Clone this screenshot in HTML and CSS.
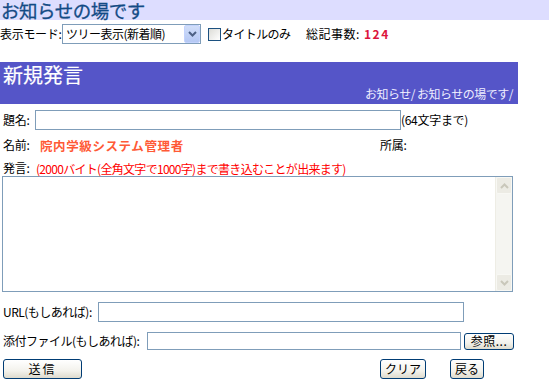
FILE: index.html
```html
<!DOCTYPE html>
<html lang="ja">
<head>
<meta charset="utf-8">
<title>お知らせの場です</title>
<link rel="stylesheet" href="styles.css">
</head>
<body>
<div class="top"><h1 class="site-title">お知らせの場です</h1></div>
<div class="mode-row">
  <span class="label l-mode">表示モード:</span>
  <div class="select">
    <span class="select-text">ツリー表示(新着順)</span>
    <span class="select-btn"><svg width="9" height="6" viewBox="0 0 9 6"><path d="M1 1 L4.5 4.5 L8 1" fill="none" stroke="#4d6185" stroke-width="2"/></svg></span>
  </div>
  <span class="checkbox"></span>
  <span class="label l-only">タイトルのみ</span>
  <span class="label total">総記事数: <b class="count">124</b></span>
</div>
<div class="band">
  <div class="band-title">新規発言</div>
  <div class="crumb">お知らせ/ お知らせの場です/</div>
</div>
<div class="form">
  <div class="row r-title">
    <span class="label l-title">題名:</span>
    <span class="input in-title"></span>
    <span class="label">(64文字まで)</span>
  </div>
  <div class="row r-name">
    <span class="label l-name">名前:</span>
    <span class="name">院内学級システム管理者</span>
    <span class="label">所属:</span>
  </div>
  <div class="row r-msg">
    <span class="label l-msg">発言:</span>
    <span class="note">(2000バイト(全角文字で1000字)まで書き込むことが出来ます)</span>
  </div>
  <div class="textarea">
    <div class="ta-body"></div>
    <div class="scroll">
      <span class="sbtn"><svg width="9" height="6" viewBox="0 0 9 6"><path d="M1 5 L4.5 1.5 L8 5" fill="none" stroke="#c9c7ba" stroke-width="2"/></svg></span>
      <span class="strack"></span>
      <span class="sbtn"><svg width="9" height="6" viewBox="0 0 9 6"><path d="M1 1 L4.5 4.5 L8 1" fill="none" stroke="#c9c7ba" stroke-width="2"/></svg></span>
    </div>
  </div>
  <div class="row r-url">
    <span class="label l-url">URL(もしあれば):</span>
    <span class="input in-url"></span>
  </div>
  <div class="row r-file">
    <span class="label l-file">添付ファイル(もしあれば):</span>
    <span class="input in-file"></span>
    <span class="btn b-browse">参照...</span>
  </div>
  <div class="row r-buttons">
    <span class="btn b-send">送信</span>
    <span class="btn b-clear">クリア</span>
    <span class="btn b-back">戻る</span>
  </div>
</div>
</body>
</html>
```
FILE: styles.css
```css
* { box-sizing: border-box; }
body {
  margin: 0;
  font-family: "Noto Sans CJK JP", "Noto Sans", sans-serif;
  font-size: 12px;
  color: #000;
  background: #fff;
  width: 549px;
}
.top {
  background: #ddddff;
  height: 20px;
  display: flex;
  align-items: center;
  padding-left: 1px;
}
.site-title {
  margin: 0;
  font-size: 18.5px;
  line-height: 1;
  font-weight: normal;
  color: #134b85;
  letter-spacing: -0.5px;
  white-space: nowrap;
  -webkit-text-stroke: 0.3px #134b85;
}
.mode-row {
  display: flex;
  align-items: center;
  height: 20px;
  margin-top: 4px;
}
.label { white-space: nowrap; line-height: 16px; letter-spacing: -0.3px; }
.l-mode { width: 62px; }
.select {
  width: 139px;
  height: 20px;
  border: 1px solid #7f9db9;
  display: flex;
  align-items: center;
  padding-left: 3px;
  justify-content: space-between;
}
.select-text { line-height: 16px; letter-spacing: -0.5px; }
.select-btn {
  width: 16px;
  height: 18px;
  background: linear-gradient(#d1def9, #b5c8f4);
  border: 1px solid #c3d3fd;
  border-radius: 2px;
  display: flex;
  align-items: center;
  justify-content: center;
}
.checkbox {
  width: 13px;
  height: 13px;
  margin-left: 7px;
  border: 1px solid #1c5180;
  background: linear-gradient(135deg, #dcdcd7, #fff);
  margin-right: 1px;
}
.l-only { width: 84px; letter-spacing: -0.6px; }
.total { letter-spacing: 0.5px; }
.count { color: #dc143c; font-weight: bold; margin-left: 1px; letter-spacing: 1.5px; }

.band {
  margin-top: 18px;
  width: 518px;
  height: 42px;
  background: #5555c8;
  color: #fff;
  display: flex;
  flex-direction: column;
}
.band-title {
  font-size: 20px;
  line-height: 24px;
  margin-top: 1px;
  padding-left: 3px;
  -webkit-text-stroke: 0.2px #fff;
}
.crumb {
  align-self: flex-end;
  padding-right: 5px;
  line-height: 14px;
  font-size: 12px;
  color: #eeeeff;
  letter-spacing: -0.5px;
}

.row { display: flex; align-items: center; padding-left: 3px; }
.r-title { margin-top: 6px; height: 20px; }
.l-title { width: 32px; }
.input {
  display: block;
  border: 1px solid #7f9db9;
  background: #fff;
}
.in-title { width: 366px; height: 20px; }
.r-name { margin-top: 5px; height: 20px; }
.l-name { width: 37px; }
.name { color: #ff5a36; font-weight: bold; width: 340px; font-size: 12.5px; letter-spacing: 0.6px; white-space: nowrap; }
.r-msg { margin-top: 5px; height: 16px; }
.l-msg { width: 33px; }
.note { color: #ff0000; letter-spacing: -0.7px; white-space: nowrap; }

.textarea {
  margin-left: 2px;
  width: 511px;
  height: 116px;
  border: 1px solid #7f9db9;
  display: flex;
}
.ta-body { flex: 1; }
.scroll {
  width: 17px;
  display: flex;
  flex-direction: column;
  background: #f5f5f1;
  border-left: 1px solid #eeede5;
}
.sbtn {
  height: 17px;
  background: #ecebe4;
  border: 1px solid #f8f8f4;
  border-radius: 2px;
  display: flex;
  align-items: center;
  justify-content: center;
}
.strack { flex: 1; }

.r-url { margin-top: 10px; height: 20px; }
.l-url { width: 95px; letter-spacing: -0.5px; }
.in-url { width: 366px; height: 20px; }
.r-file { margin-top: 10px; height: 18px; }
.l-file { width: 144px; letter-spacing: -0.5px; }
.in-file { width: 314px; height: 18px; }

.btn {
  display: flex;
  align-items: center;
  justify-content: center;
  border: 1px solid #003c74;
  border-radius: 3px;
  background: linear-gradient(#ffffff, #f3f2ec 60%, #dedbcd);
  line-height: 14px;
  white-space: nowrap;
}
.b-browse { width: 50px; height: 17px; margin-left: 3px; letter-spacing: 0.5px; }
.r-buttons { margin-top: 9px; height: 20px; }
.b-send { width: 79px; height: 20px; letter-spacing: 2px; }
.b-clear { width: 46px; height: 20px; margin-left: 298px; }
.b-back { width: 34px; height: 20px; margin-left: 24px; }
```
